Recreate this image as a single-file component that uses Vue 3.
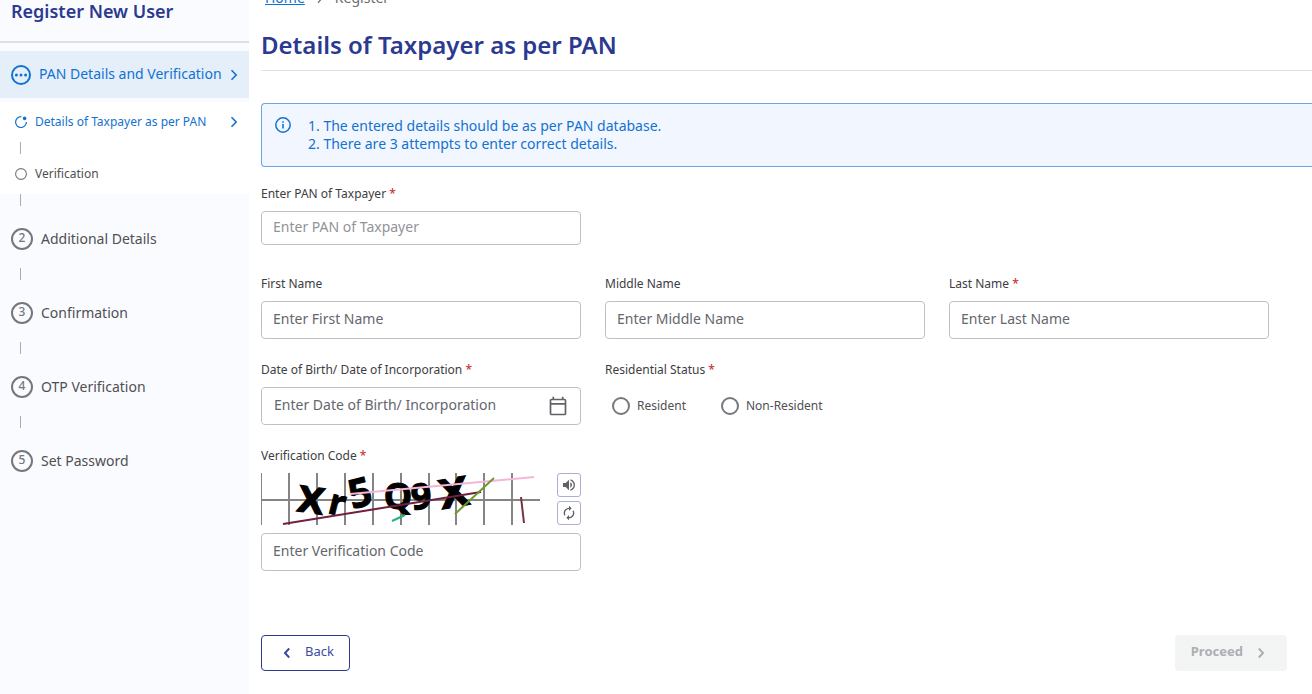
<script setup>
import { reactive } from 'vue'

const subSteps = [
  { label: 'Details of Taxpayer as per PAN', current: true },
  { label: 'Verification', current: false },
]
const steps = [
  { n: 2, label: 'Additional Details' },
  { n: 3, label: 'Confirmation' },
  { n: 4, label: 'OTP Verification' },
  { n: 5, label: 'Set Password' },
]
const form = reactive({ pan: '', first: '', middle: '', last: '', dob: '', status: '', code: '' })
const gridLines = [0, 28, 56, 84, 112, 140, 168, 195, 223, 251]
</script>

<template>
  <div class="page">
    <aside class="sidebar">
      <h2 class="side-title">Register New User</h2>
      <nav aria-label="Registration steps">
        <a class="step-active" href="#pan">
          <svg class="dots" viewBox="0 0 20 20" aria-hidden="true">
            <circle cx="10" cy="10" r="9" fill="none" stroke="currentColor" stroke-width="2" />
            <circle cx="5.4" cy="10" r="1.5" /><circle cx="10" cy="10" r="1.5" /><circle cx="14.6" cy="10" r="1.5" />
          </svg>
          <span>PAN Details and Verification</span>
          <svg class="chev" viewBox="0 0 8 12" aria-hidden="true"><path d="M1.5 1.2 6.2 6l-4.7 4.8" /></svg>
        </a>
        <ul class="sub">
          <li v-for="s in subSteps" :key="s.label">
            <a href="#sub" :class="{ current: s.current }">
              <svg v-if="s.current" class="mini" viewBox="0 0 12 12" aria-hidden="true">
                <path d="M6.400 .7A5.400 5.400 0 1 0 11.400 6" fill="none" stroke="currentColor" stroke-width="1.2" />
                <circle cx="9.600" cy="2.400" r="1.8" />
              </svg>
              <svg v-else class="mini ring" viewBox="0 0 12 12" aria-hidden="true">
                <circle cx="6" cy="6" r="5.4" fill="none" stroke="currentColor" stroke-width="1.1" />
              </svg>
              <span>{{ s.label }}</span>
              <svg v-if="s.current" class="chev" viewBox="0 0 8 12" aria-hidden="true"><path d="M1.5 1.2 6.2 6l-4.7 4.8" /></svg>
            </a>
          </li>
        </ul>
        <ol class="steps">
          <li v-for="s in steps" :key="s.n">
            <a href="#step"><b>{{ s.n }}</b><span>{{ s.label }}</span></a>
          </li>
        </ol>
      </nav>
    </aside>

    <main>
      <nav class="crumbs" aria-label="Breadcrumb">
        <a href="#home">Home</a>
        <svg viewBox="0 0 8 12" aria-hidden="true"><path d="M2 1.2 6.2 6 2 10.8" /></svg>
        <span>Register</span>
      </nav>
      <h1>Details of Taxpayer as per PAN</h1>
      <section class="notice">
        <svg viewBox="0 0 16 16" aria-hidden="true">
          <circle cx="8" cy="8" r="7.2" fill="none" stroke="currentColor" stroke-width="1.5" />
          <path d="M7.200 7h1.600v4.600H7.200zM7.200 4.300h1.600v1.500H7.200z" />
        </svg>
        <div>
          <p>1. The entered details should be as per PAN database.</p>
          <p>2. There are 3 attempts to enter correct details.</p>
        </div>
      </section>

      <form @submit.prevent>
        <div class="row row-pan">
          <div class="field">
            <label for="pan">Enter PAN of Taxpayer <i>*</i></label>
            <input id="pan" v-model="form.pan" class="short" type="text" placeholder="Enter PAN of Taxpayer">
          </div>
        </div>
        <div class="row">
          <div class="field">
            <label for="first">First Name</label>
            <input id="first" v-model="form.first" type="text" placeholder="Enter First Name">
          </div>
          <div class="field">
            <label for="middle">Middle Name</label>
            <input id="middle" v-model="form.middle" type="text" placeholder="Enter Middle Name">
          </div>
          <div class="field">
            <label for="last">Last Name <i>*</i></label>
            <input id="last" v-model="form.last" type="text" placeholder="Enter Last Name">
          </div>
        </div>
        <div class="row">
          <div class="field">
            <label for="dob">Date of Birth/ Date of Incorporation <i>*</i></label>
            <div class="date">
              <input id="dob" v-model="form.dob" type="text" placeholder="Enter Date of Birth/ Incorporation">
              <button type="button" aria-label="Open calendar">
                <svg viewBox="0 0 18 20" aria-hidden="true">
                  <path d="M2.500 3.500h13a1 1 0 0 1 1 1V17.500a1 1 0 0 1-1 1h-13a1 1 0 0 1-1-1V4.500a1 1 0 0 1 1-1zM1.500 7.800h15M4.300 3.500V.8M13.700 3.500V.8" fill="none" stroke="currentColor" stroke-width="1.7" />
                </svg>
              </button>
            </div>
          </div>
          <fieldset class="field">
            <legend>Residential Status <i>*</i></legend>
            <div class="radios">
              <label><input v-model="form.status" type="radio" name="status" value="r">Resident</label>
              <label><input v-model="form.status" type="radio" name="status" value="n">Non-Resident</label>
            </div>
          </fieldset>
        </div>
        <div class="row">
          <div class="field">
            <label for="code">Verification Code <i>*</i></label>
            <div class="captcha">
              <svg class="challenge" viewBox="0 0 279 52" role="img" aria-label="Verification code">
                <g stroke="#858585" stroke-width="2">
                  <line v-for="x in gridLines" :key="x" :x1="x" :x2="x" y1="0" y2="52" />
                  <line x1="0" x2="279" y1="27" y2="27" />
                </g>
                <g class="glyphs">
                  <text class="wide" y="13" transform="translate(50 27) rotate(8)">X</text>
                  <text y="10" transform="translate(76 32) rotate(14)">r</text>
                  <text class="tall" y="14" transform="translate(99 20) rotate(-14)">5</text>
                  <text y="13" transform="translate(137 23)">Q</text>
                  <text y="14" transform="translate(160 22) rotate(-4)">9</text>
                  <text class="wide tall" y="14" transform="translate(193 20) rotate(-10)">X</text>
                </g>
                <g fill="none" stroke-width="2">
                  <path d="M89 21 273 4" stroke="#f4b6d8" />
                  <path d="M22 51 220 19" stroke="#702040" />
                  <path d="M194 41 233 5" stroke="#6b9b2c" />
                  <path d="M131 48 144 42" stroke="#1fb584" />
                  <path d="M260 24 263 50" stroke="#74343f" />
                </g>
              </svg>
              <div class="tools">
                <button type="button" aria-label="Play audio code">
                  <svg viewBox="0 0 24 24" aria-hidden="true"><path d="M3 9v6h4l5 5V4L7 9H3zm13.500 3c0-1.770-1.020-3.290-2.500-4.030v8.050c1.480-.73 2.500-2.250 2.500-4.020zM14 3.230v2.060c2.890.86 5 3.540 5 6.710s-2.110 5.850-5 6.710v2.060c4.010-.91 7-4.490 7-8.770s-2.990-7.860-7-8.770z" /></svg>
                </button>
                <button type="button" aria-label="Refresh code">
                  <svg viewBox="0 0 24 24" aria-hidden="true"><path d="M12 6v3l4-4-4-4v3c-4.420 0-8 3.580-8 8 0 1.570.46 3.030 1.240 4.260L6.700 14.800c-.45-.83-.7-1.790-.7-2.800 0-3.310 2.690-6 6-6zm6.760 1.740L17.300 9.200c.44.84.7 1.790.7 2.800 0 3.310-2.690 6-6 6v-3l-4 4 4 4v-3c4.420 0 8-3.580 8-8 0-1.570-.46-3.030-1.240-4.260z" /></svg>
                </button>
              </div>
            </div>
            <input id="code" v-model="form.code" type="text" placeholder="Enter Verification Code">
          </div>
        </div>
        <div class="actions">
          <button type="button" class="back">
            <svg viewBox="0 0 8 12" aria-hidden="true"><path d="M6.200 1.500 2 6l4.200 4.500" /></svg>
            Back
          </button>
          <button type="submit" class="proceed" disabled>
            Proceed
            <svg viewBox="0 0 8 12" aria-hidden="true"><path d="M1.800 1.500 6 6l-4.200 4.500" /></svg>
          </button>
        </div>
      </form>
    </main>
  </div>
</template>

<style>
body { background: #fff; overflow: hidden; }
</style>

<style scoped>
.page {
  display: grid;
  grid-template-columns: 249px minmax(0, 1fr);
  column-gap: 12px;
  min-height: 100vh;
  overflow: hidden;
  font: 14px/18px "Noto Sans", sans-serif;
  color: #4f4f54;
}
* { box-sizing: border-box; }
a { color: inherit; text-decoration: none; }
button, input { font: inherit; color: inherit; }
h1, h2, p, ul, ol { margin: 0; padding: 0; list-style: none; }
svg { flex: none; fill: currentColor; }

.sidebar { background: #fafbff; }
.side-title {
  height: 43px;
  padding-left: 11px;
  border-bottom: 2px solid #dddfe4;
  font-size: 18px;
  line-height: 22px;
  font-weight: 600;
  color: #2b3990;
}
.step-active {
  display: flex;
  align-items: center;
  height: 47px;
  margin: 8px 0 4px;
  padding: 0 11px;
  background: #e4effa;
  color: #1272d0;
}
.step-active span { margin-left: 8px; padding-bottom: 2px; white-space: nowrap; }
.dots { width: 20px; height: 20px; }
.chev { width: 8px; height: 12px; margin-left: auto; }
.chev path, .crumbs path { fill: none; stroke: currentColor; stroke-width: 1.6; }
.sub { background: #fff; font-size: 12px; }
.sub a { display: flex; align-items: center; height: 40px; padding: 0 11px 0 15px; }
.sub .current { color: #1272d0; }
.mini { width: 12px; height: 12px; margin-right: 8px; }
.ring { color: #77777b; }
.sub li + li::before, .steps li::before {
  content: "";
  display: block;
  width: 1px;
  height: 12px;
  margin-left: 20px;
  background: #a9abb0;
}
.steps a { display: flex; align-items: center; height: 62px; padding: 4px 11px 0; }
.steps b {
  width: 22px;
  height: 22px;
  margin-right: 8px;
  border: 2px solid #77777b;
  border-radius: 50%;
  font-size: 12px;
  line-height: 16px;
  font-weight: 500;
  text-align: center;
  color: #77777b;
}

.crumbs { display: flex; align-items: center; height: 18px; margin-top: -11px; padding-left: 4px; color: #6b6b70; }
.crumbs a { color: #1272d0; text-decoration: underline; }
.crumbs svg { width: 8px; height: 12px; margin: 0 11px; }
.crumbs path { stroke-width: 1.2; }
h1 {
  margin-top: 22px;
  padding-bottom: 9px;
  border-bottom: 1px solid #e2e2e5;
  font-size: 24px;
  line-height: 32px;
  font-weight: 600;
  color: #2b3990;
}
.notice {
  display: flex;
  margin-top: 32px;
  padding: 13px 11px;
  border: 1px solid #6aa7e0;
  border-right: 0;
  border-radius: 4px 0 0 4px;
  background: #f2f6ff;
  color: #1272d0;
}
.notice svg { width: 16px; height: 16px; margin: 0 17px 0 2px; }

form { padding-top: 18px; }
.row {
  display: grid;
  grid-template-columns: repeat(3, minmax(0, 1fr));
  gap: 24px;
  margin: 0 43px 22px 0;
}
.row-pan { margin-bottom: 30px; }
.field { min-width: 0; margin: 0; padding: 0; border: 0; }
.field > label, legend {
  display: block;
  margin-bottom: 8px;
  padding: 0;
  font-size: 12px;
  line-height: 18px;
  color: #3d3d42;
}
.field i { font-style: normal; font-weight: 500; color: #c93434; }
input[type="text"] {
  display: block;
  width: 100%;
  height: 38px;
  padding: 0 11px 3px;
  border: 1px solid #bfc0c5;
  border-radius: 4px;
  background: #fff;
  outline: 0;
}
input.short { height: 34px; }
input::placeholder { color: #65666d; opacity: 1; }
input.short::placeholder { color: #929398; }
.date { display: flex; align-items: center; border: 1px solid #bfc0c5; border-radius: 4px; }
.date input[type="text"] { flex: 1; min-width: 0; height: 36px; padding-left: 12px; border: 0; }
.date button { display: flex; margin-right: 13px; padding: 0; border: 0; background: none; color: #626267; }
.date svg { width: 18px; height: 20px; }
.radios { display: flex; gap: 35px; padding: 10px 7px; }
.radios label { display: flex; align-items: center; gap: 7px; font-size: 12px; }
.radios input {
  appearance: none;
  width: 18px;
  height: 18px;
  margin: 0;
  border: 2px solid #77787d;
  border-radius: 50%;
}
.radios input:checked { border-width: 6px; }

.captcha { display: flex; justify-content: space-between; margin-bottom: 8px; }
.challenge { width: 279px; height: 52px; }
.glyphs { font: bold 36px "Noto Sans", sans-serif; fill: #000; stroke: #000; stroke-width: 1; text-anchor: middle; }
.wide { font-family: "DejaVu Sans", sans-serif; }
.tall { font-size: 40px; }
.tools { display: grid; gap: 4px; }
.tools button {
  display: grid;
  place-items: center;
  width: 24px;
  height: 24px;
  padding: 0;
  border: 1px solid #aab0d8;
  border-radius: 3px;
  background: #fff;
  color: #606166;
}
.tools svg { width: 16px; height: 16px; }

.actions { display: flex; justify-content: space-between; margin: 64px 25px 0 0; }
.actions button { display: flex; align-items: center; height: 36px; padding: 0 15px 4px; border-radius: 4px; font-size: 13px; }
.actions svg { width: 8px; height: 12px; }
.actions path { fill: none; stroke: currentColor; stroke-width: 2; }
.back { border: 1px solid #2b3990; background: #fff; color: #3b4aa3; }
.back svg { margin: 4px 14px 0 6px; }
.actions .proceed { padding-left: 16px; border: 0; background: #f3f5f5; color: #adaeb4; font-weight: 700; }
.proceed svg { margin: 4px 7px 0 14px; }
</style>
